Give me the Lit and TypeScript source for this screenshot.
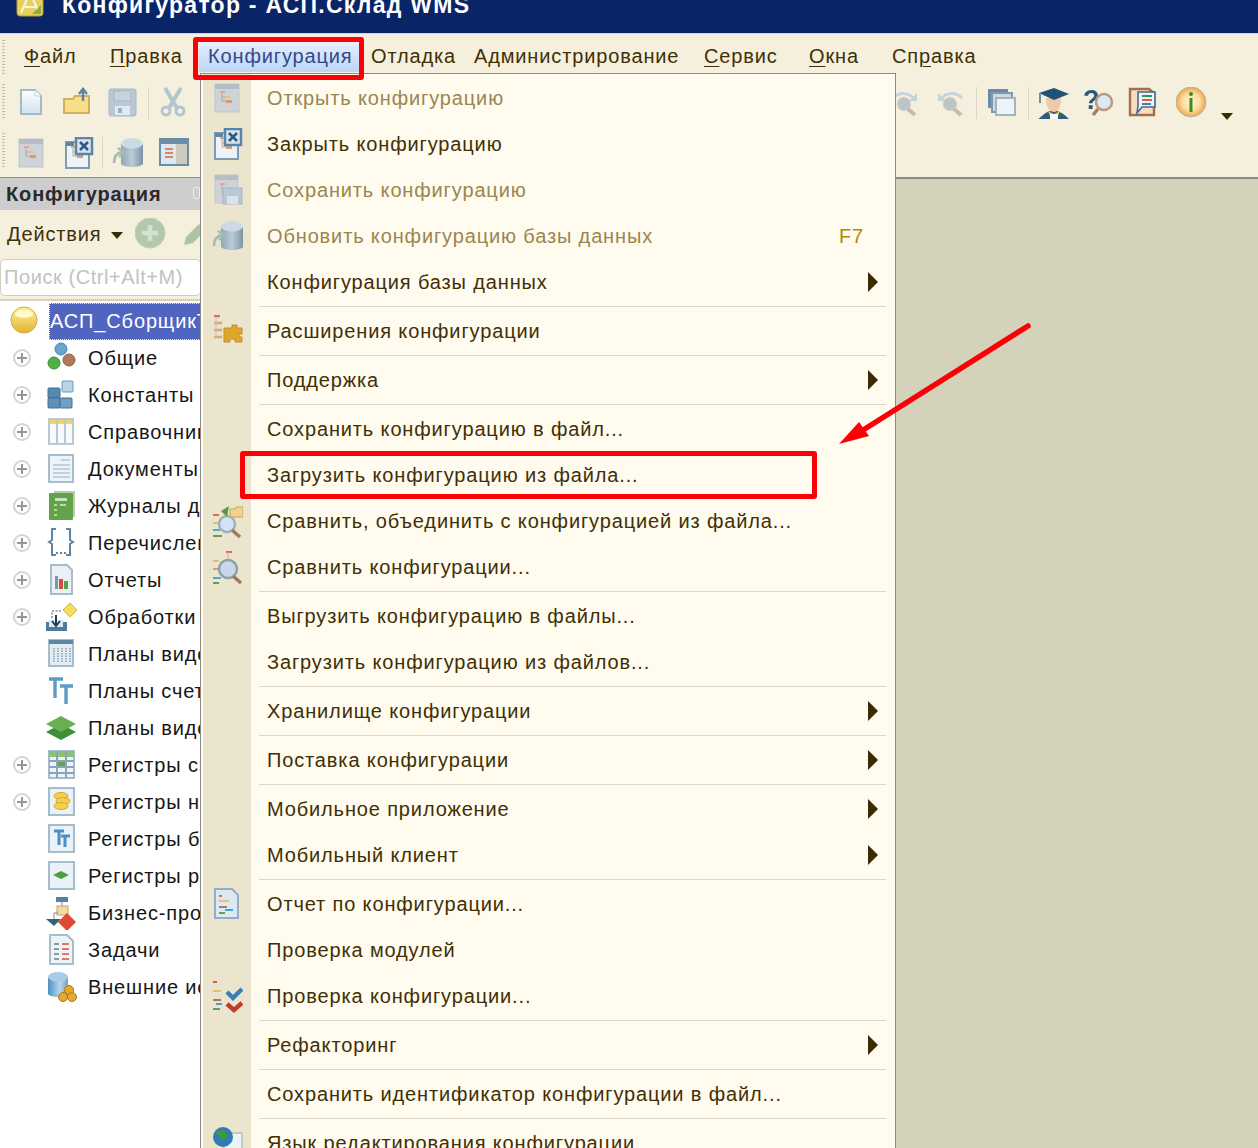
import { LitElement, html, css, svg } from 'lit';
import { customElement } from 'lit/decorators.js';

const tree = svg`
  <rect x="8" y="9" width="5" height="2" fill="#e8a18c"/>
  <path d="M10 11v8h4M10 15h4" stroke="#b5aa96" fill="none"/>
  <rect x="14" y="14" width="4" height="2" fill="#e0c27a"/>
  <rect x="14" y="18" width="6" height="3" fill="#d99a78"/>`;

const icons: Record<string, unknown> = {
  doc: svg`<path d="M5 3h14l6 6v18H5z" fill="url(#gDoc)" stroke="#a3bac8" stroke-width="2"/><path d="M19 3v6h6" fill="#fff" stroke="#c3d0d9"/>`,
  folder: svg`<path d="M2 12h9l2-3h14v17H2z" fill="#f6df86" stroke="#cfae66" stroke-width="2"/><path d="M21 14V3M17 7l4-5 4 5" stroke="#5f819b" stroke-width="2.4" fill="none"/>`,
  save: svg`<rect x="2" y="2" width="27" height="27" rx="2" fill="#b8c8d4" stroke="#a5b8c6"/><rect x="7" y="4" width="17" height="10" fill="#c6d3dd" stroke="#a5b8c6"/><rect x="8" y="19" width="15" height="9" fill="#e1e8ee"/><rect x="11" y="21" width="4" height="5" fill="#9db0be"/>`,
  scissors: svg`<path d="M7 1l12 20M23 1L11 21" stroke="#b4c5d2" stroke-width="4"/><circle cx="8" cy="24" r="4" fill="none" stroke="#b4c5d2" stroke-width="3"/><circle cx="22" cy="24" r="4" fill="none" stroke="#b4c5d2" stroke-width="3"/>`,
  magR: svg`<path d="M3 11c6-6 16-6 21 1" stroke="#c4d3dc" stroke-width="3" fill="none"/><path d="M27 6v8h-8z" fill="#c4d3dc"/><circle cx="14" cy="17" r="6" fill="#b5c5cf" stroke="#cfc4ba" stroke-width="2"/><path d="M18 22l7 6" stroke="#cdb8ac" stroke-width="4"/>`,
  magL: svg`<path d="M27 11C21 5 11 5 6 12" stroke="#c4d3dc" stroke-width="3" fill="none"/><path d="M3 6v8h8z" fill="#c4d3dc"/><circle cx="15" cy="17" r="6" fill="#b5c5cf" stroke="#cfc4ba" stroke-width="2"/><path d="M19 22l7 6" stroke="#cdb8ac" stroke-width="4"/>`,
  windows: svg`<rect x="1" y="2" width="20" height="19" rx="1" fill="#6a8ba6"/><rect x="5" y="6" width="20" height="19" fill="#cdd9e3" stroke="#7c99af" stroke-width="2"/><rect x="9" y="11" width="19" height="17" fill="#eef3f8" stroke="#a0b4c3" stroke-width="2"/>`,
  grad: svg`<path d="M12 24C5 26 3 31 0 32h31c-3-3-6-6-12-8z" fill="#2d5c7c"/><path d="M10 24l3 8h6l3-8-6 3z" fill="#e8c23c"/><rect x="12" y="27" width="8" height="5" fill="#fbfbf4"/><path d="M8 11c0 10 4 14 8 14s7-5 7-14z" fill="#edc9a7"/><path d="M1 6l15-5 15 6-15 6z" fill="#1f5275"/><path d="M2 6v10" stroke="#6f8fa5" stroke-width="2"/>`,
  helpFind: svg`<text x="0" y="22" font-family="Liberation Sans" font-weight="700" font-size="27" fill="#2c5878">?</text><circle cx="21" cy="15" r="8" fill="#dbe9f6" stroke="#b89a80" stroke-width="2.5"/><path d="M15 22l-5 6" stroke="#a57f62" stroke-width="3.5"/>`,
  note: svg`<path d="M2 2h19l5 4v22H2z" fill="#f8dcc4" stroke="#a06f4c" stroke-width="2.4"/><path d="M10 5h17v15H14l-5 6 1-7z" fill="#eef3f8" stroke="#3f6b8c" stroke-width="1.6"/><path d="M14 9h10" stroke="#2f9a58" stroke-width="2"/><path d="M14 13h10" stroke="#e0555a" stroke-width="2"/><path d="M14 17h9" stroke="#4a7ea8" stroke-width="2"/>`,
  info: svg`<circle cx="15" cy="15" r="15" fill="url(#gInfo)" stroke="#bdb4a3"/><circle cx="15" cy="7" r="2" fill="#3f8a22"/><rect x="13.5" y="11" width="3" height="14" fill="#3f8a22"/>`,
  cfg: svg`<rect x="3" y="2" width="24" height="28" fill="#cdd3d7" stroke="#bec7cd"/><rect x="3" y="2" width="24" height="5" fill="#b4bec5"/>${tree}`,
  cfgClose: svg`<rect x="3" y="5" width="23" height="26" fill="#eef3f8" stroke="#7f9bb0" stroke-width="2"/><rect x="3" y="5" width="8" height="4" fill="#5f87a4"/>${tree}<rect x="13" y="1" width="16" height="16" fill="#d7e3ec" stroke="#5a85a6" stroke-width="2.5"/><path d="M17 5l8 8M25 5l-8 8" stroke="#2a5b86" stroke-width="2.6"/>`,
  cfgSave: svg`<rect x="3" y="1" width="23" height="28" fill="#cdd3d7" stroke="#bec7cd"/><rect x="3" y="1" width="23" height="5" fill="#b4bec5"/>${tree}<rect x="11" y="14" width="19" height="16" fill="#b8c8d4" stroke="#a5b8c6"/><rect x="15" y="22" width="11" height="8" fill="#dbe3ea"/>`,
  dbArrow: svg`<ellipse cx="20" cy="7" rx="11" ry="6" fill="#cddae3"/><path d="M9 7v20c3 4 19 4 22 0V7c-3 6-19 6-22 0z" fill="url(#gDb)"/><path d="M2 26c0-6 2-10 8-11M6 11l6 4-5 5" stroke="#a7bcb0" stroke-width="2.6" fill="none"/>`,
  form: svg`<rect x="1" y="2" width="28" height="26" fill="#dfe8ef" stroke="#6b8ea8" stroke-width="2"/><rect x="1" y="2" width="28" height="5" fill="#6b8ea8"/><rect x="17" y="7" width="11" height="20" fill="#cfcabe"/><path d="M6 12h8M6 16h8M6 20h8" stroke="#d58a65" stroke-width="2"/>`,
  add: svg`<circle cx="15" cy="15" r="15" fill="#b3c9ae" stroke="#c2ccb8"/><path d="M15 7v16M7 15h16" stroke="#d3e2d0" stroke-width="4.5"/>`,
  pencil: svg`<path d="M3 27l2-8L18 6l7 6-13 13z" fill="#b0c4a2"/>`,
  ext: svg`<path d="M2 1h6" stroke="#e2685c" stroke-width="2.4"/><path d="M2 8h8M2 15h8M2 22h8" stroke="#d5a878" stroke-width="2.4"/><path d="M4 2v21" stroke="#c8c0ae"/><path d="M12 13h8v-3h5v3h5v6h-3v3h3v5h-7v-3h-5v3h-6z" fill="#e0a52c" stroke="#c48e20"/>`,
  cmpFolder: svg`<path d="M1 10h6" stroke="#e2685c" stroke-width="2"/><path d="M1 18h6" stroke="#e0c074" stroke-width="2"/><path d="M1 25h7" stroke="#47a8d6" stroke-width="2"/><path d="M1 31h9" stroke="#62a055" stroke-width="2"/><circle cx="15" cy="19" r="8" fill="#d3e3f3" stroke="#9fb1bd" stroke-width="2.5"/><path d="M20 25l8 7" stroke="#a07a5e" stroke-width="3.5"/><path d="M17 1l-8 5 6 6z" fill="#5a9a46"/><path d="M18 4h5l1-2h7v10H18z" fill="#efd48c" stroke="#c5a45e"/>`,
  cmp: svg`<path d="M14 1h6" stroke="#e2685c" stroke-width="2"/><path d="M1 10h6" stroke="#e0c074" stroke-width="2"/><path d="M1 18h6" stroke="#d99a78" stroke-width="2"/><path d="M1 27h8" stroke="#47a8d6" stroke-width="2"/><path d="M1 32h6" stroke="#62a055" stroke-width="2"/><circle cx="16" cy="18" r="9" fill="#c8d8e8" stroke="#8ea0ae" stroke-width="2.5"/><path d="M16 1v8" stroke="#d7a2a0"/><path d="M21 25l8 7" stroke="#a07a5e" stroke-width="3.5"/>`,
  report: svg`<path d="M3 1h17l6 6v23H3z" fill="#dce8f2" stroke="#94aebf" stroke-width="2"/><path d="M7 8h3" stroke="#e2685c" stroke-width="2"/><path d="M7 13h10" stroke="#e3c36b" stroke-width="2"/><path d="M7 19h8" stroke="#b07b5a" stroke-width="2"/><path d="M13 22h8" stroke="#37a8d8" stroke-width="2"/><path d="M7 25h6" stroke="#62a055" stroke-width="2"/>`,
  check: svg`<path d="M1 2h4" stroke="#e25248" stroke-width="2"/><path d="M1 11h8" stroke="#e3c36b" stroke-width="2"/><path d="M1 20h8" stroke="#b07b5a" stroke-width="2"/><path d="M4 24h6" stroke="#37a8d8" stroke-width="2"/><path d="M1 29h7" stroke="#62a055" stroke-width="2"/><path d="M15 12l6 6 9-9" stroke="#3a7eb8" stroke-width="4.4" fill="none"/><path d="M15 24l7 6 8-7" stroke="#bd3d30" stroke-width="4.4" fill="none"/>`,
  globe: svg`<rect x="12" y="6" width="18" height="24" fill="#eef3f8" stroke="#8fa9b8"/><circle cx="11" cy="10" r="10" fill="#2e7fb0"/><path d="M4 5c5-3 9-2 11 2s-4 6-7 4z" fill="#3b9a3d"/><rect x="1" y="22" width="28" height="8" fill="#4f7a99"/>`,
  ball: svg`<circle cx="15" cy="15" r="13" fill="url(#gBall)" stroke="#d0ab40"/><ellipse cx="15" cy="9" rx="9" ry="4" fill="#fff8c8"/>`,
  common: svg`<circle cx="15" cy="7" r="6" fill="#6aa2d0" stroke="#4a84b4"/><circle cx="8" cy="21" r="6" fill="#4fb04a" stroke="#368f33"/><circle cx="23" cy="18" r="6" fill="#b07b5a" stroke="#8e5e40"/>`,
  constants: svg`<rect x="2" y="9" width="12" height="10" rx="1" fill="#5788ad" stroke="#3f6f94"/><rect x="2" y="19" width="12" height="10" rx="1" fill="#5f90b5" stroke="#3f6f94"/><rect x="14" y="19" width="12" height="10" rx="1" fill="#6f9fc2" stroke="#3f6f94"/><rect x="16" y="2" width="11" height="11" rx="1" fill="#b9d2e4" stroke="#6d9abb"/>`,
  catalogs: svg`<rect x="3" y="3" width="24" height="25" fill="#f7f9fb" stroke="#b8c8d4" stroke-width="2"/><rect x="4" y="4" width="22" height="4" fill="#f2d35e"/><path d="M11 3v25M19 3v25" stroke="#b8c8d4" stroke-width="2"/>`,
  documents: svg`<rect x="3" y="2" width="24" height="27" fill="#eef3f8" stroke="#a5bccb" stroke-width="2"/><path d="M15 7h9M7 12h17M7 16h17M7 20h17M7 24h17" stroke="#b5c6d2" stroke-width="1.6"/>`,
  journal: svg`<rect x="8" y="1" width="21" height="26" fill="#b8cfae"/><rect x="3" y="3" width="24" height="27" rx="1" fill="#62a24a"/><rect x="9" y="8" width="12" height="3" fill="#c8e2bd"/><path d="M8 15h3M8 20h3M8 25h3M14 15h6" stroke="#d5e9cc" stroke-width="1.5"/>`,
  enums: svg`<path d="M10 2H6v11l-3 2 3 2v11h4M20 2h4v11l3 2-3 2v11h-4" stroke="#5f87a4" stroke-width="2" fill="none"/><path d="M10 26h2M14 26h2M18 26h2" stroke="#5f87a4" stroke-width="2"/>`,
  reports: svg`<path d="M5 1h16l5 5v24H5z" fill="#eaf0f6" stroke="#a5bccb" stroke-width="2"/><rect x="9" y="12" width="3" height="13" fill="#7b95a9"/><rect x="13" y="15" width="4" height="10" fill="#d84a3c"/><rect x="18" y="17" width="4" height="8" fill="#4da843"/>`,
  processing: svg`<path d="M17 9l7-7 7 7-7 7z" fill="#f6dc5b" stroke="#d4b53d"/><path d="M15 10H6v8" stroke="#555" stroke-dasharray="2 1.5" fill="none"/><path d="M0 21h21v9H0z" fill="#4f7a99"/><rect x="3" y="19" width="14" height="7" fill="#dce8f2"/><path d="M10 14v10M6 20l4 5 4-5" stroke="#1f3f5a" stroke-width="2" fill="none"/>`,
  charts: svg`<rect x="3" y="2" width="24" height="26" fill="#e4ecf2" stroke="#a5bccb" stroke-width="2"/><rect x="3" y="2" width="24" height="4" fill="#5f87a4"/><path d="M8 10v14M12 10v14M16 10v14M20 10v14M24 10v14" stroke="#9db2c2" stroke-width="2" stroke-dasharray="1.5 1"/>`,
  accounts: svg`<path d="M3 4h14M9 4v19" stroke="#5b9ccb" stroke-width="3.4" fill="none"/><path d="M14 11h13M20 11v18" stroke="#5b9ccb" stroke-width="3.4" fill="none"/>`,
  layers: svg`<path d="M0 20l15-8 15 8-15 8z" fill="#3d8f3a"/><path d="M0 12l15-8 15 8-15 8z" fill="#6aaf4f"/>`,
  regInfo: svg`<rect x="3" y="2" width="25" height="27" fill="#eef3f8" stroke="#a5bccb" stroke-width="2"/><rect x="3" y="2" width="25" height="6" fill="#8cc076"/><path d="M11 2v27M20 2v27M3 12h25M3 18h25M3 24h25" stroke="#8aa5b8" stroke-width="2"/><rect x="12" y="13" width="7" height="4" fill="#62a84a"/>`,
  regAccum: svg`<rect x="3" y="2" width="25" height="27" fill="#eaf1f7" stroke="#a5bccb" stroke-width="2"/><ellipse cx="15" cy="10" rx="7" ry="3.5" fill="#f2cf4e" stroke="#d8a82a"/><ellipse cx="17" cy="15" rx="7" ry="3.5" fill="#f2cf4e" stroke="#d8a82a"/><ellipse cx="15" cy="20" rx="7" ry="3.5" fill="#f2cf4e" stroke="#d8a82a"/>`,
  regBuh: svg`<rect x="3" y="2" width="25" height="27" fill="#eaf1f7" stroke="#a5bccb" stroke-width="2"/><path d="M8 8h10M13 8v14" stroke="#4b8fc0" stroke-width="3" fill="none"/><path d="M15 13h9M19 13v11" stroke="#4b8fc0" stroke-width="3" fill="none"/>`,
  regCalc: svg`<rect x="3" y="2" width="25" height="27" fill="#eaf1f7" stroke="#a5bccb" stroke-width="2"/><path d="M7 15l8-4 8 4-8 4z" fill="#4f9f3f"/>`,
  bp: svg`<rect x="10" y="0" width="12" height="5" fill="#4e83ad"/><path d="M16 5v5" stroke="#888"/><rect x="11" y="9" width="11" height="9" fill="#f1d9a8" stroke="#c2a06a"/><path d="M0 22h15l-7 7z" fill="#3c5f79"/><path d="M21 16l9 9-9 9-9-9z" fill="#de4b33"/><path d="M8 22v-6h4" stroke="#888" fill="none"/>`,
  tasks: svg`<path d="M4 1h17l6 6v23H4z" fill="#eef3f8" stroke="#a5bccb" stroke-width="2"/><path d="M8 10h5M8 15h5M8 20h5M8 25h5" stroke="#8c99a3" stroke-width="2"/><path d="M16 10h7M16 15h7M16 20h7M16 25h7" stroke="#dd7a6e" stroke-width="2"/>`,
  source: svg`<ellipse cx="12" cy="6" rx="10" ry="5" fill="#a9cde6"/><path d="M2 6v17c2 4 18 4 20 0V6c-2 6-18 6-20 0z" fill="url(#gSrc)"/><circle cx="23" cy="19" r="4.5" fill="#e5a92c" stroke="#a9771a"/><circle cx="17" cy="26" r="4.5" fill="#e5a92c" stroke="#a9771a"/><circle cx="26" cy="26" r="4.5" fill="#e5a92c" stroke="#a9771a"/>`,
};

const icon = (name?: string) =>
  name
    ? html`<svg class="ico" viewBox="0 0 31 33" aria-hidden="true">
        <defs>
          <linearGradient id="gDoc" x2="0" y2="1"><stop offset="0" stop-color="#fff"/><stop offset="1" stop-color="#cfe0ef"/></linearGradient>
          <linearGradient id="gDb"><stop offset="0" stop-color="#8fa8bb"/><stop offset=".5" stop-color="#bccbd6"/><stop offset="1" stop-color="#7c94a6"/></linearGradient>
          <linearGradient id="gSrc"><stop offset="0" stop-color="#4f8fbf"/><stop offset=".6" stop-color="#b8d8ee"/><stop offset="1" stop-color="#6ca3c8"/></linearGradient>
          <radialGradient id="gInfo"><stop offset="0" stop-color="#fff6d8"/><stop offset=".6" stop-color="#fbdc9c"/><stop offset="1" stop-color="#efa24a"/></radialGradient>
          <linearGradient id="gBall" x2="0" y2="1"><stop offset="0" stop-color="#fff3a8"/><stop offset="1" stop-color="#e3b12c"/></linearGradient>
        </defs>
        ${icons[name]}
      </svg>`
    : '';

type Entry = { t?: string; i?: string; off?: boolean; arrow?: boolean; key?: string; sep?: boolean };

const menu: Entry[] = [
  { t: 'Открыть конфигурацию', i: 'cfg', off: true },
  { t: 'Закрыть конфигурацию', i: 'cfgClose' },
  { t: 'Сохранить конфигурацию', i: 'cfgSave', off: true },
  { t: 'Обновить конфигурацию базы данных', i: 'dbArrow', off: true, key: 'F7' },
  { t: 'Конфигурация базы данных', arrow: true },
  { sep: true },
  { t: 'Расширения конфигурации', i: 'ext' },
  { sep: true },
  { t: 'Поддержка', arrow: true },
  { sep: true },
  { t: 'Сохранить конфигурацию в файл...' },
  { t: 'Загрузить конфигурацию из файла...' },
  { t: 'Сравнить, объединить с конфигурацией из файла...', i: 'cmpFolder' },
  { t: 'Сравнить конфигурации...', i: 'cmp' },
  { sep: true },
  { t: 'Выгрузить конфигурацию в файлы...' },
  { t: 'Загрузить конфигурацию из файлов...' },
  { sep: true },
  { t: 'Хранилище конфигурации', arrow: true },
  { sep: true },
  { t: 'Поставка конфигурации', arrow: true },
  { sep: true },
  { t: 'Мобильное приложение', arrow: true },
  { t: 'Мобильный клиент', arrow: true },
  { sep: true },
  { t: 'Отчет по конфигурации...', i: 'report' },
  { t: 'Проверка модулей' },
  { t: 'Проверка конфигурации...', i: 'check' },
  { sep: true },
  { t: 'Рефакторинг', arrow: true },
  { sep: true },
  { t: 'Сохранить идентификатор конфигурации в файл...' },
  { sep: true },
  { t: 'Язык редактирования конфигурации', i: 'globe' },
];

const treeRows: [string, string, boolean][] = [
  ['Общие', 'common', true],
  ['Константы', 'constants', true],
  ['Справочники', 'catalogs', true],
  ['Документы', 'documents', true],
  ['Журналы документов', 'journal', true],
  ['Перечисления', 'enums', true],
  ['Отчеты', 'reports', true],
  ['Обработки', 'processing', true],
  ['Планы видов характеристик', 'charts', false],
  ['Планы счетов', 'accounts', false],
  ['Планы видов расчета', 'layers', false],
  ['Регистры сведений', 'regInfo', true],
  ['Регистры накопления', 'regAccum', true],
  ['Регистры бухгалтерии', 'regBuh', false],
  ['Регистры расчета', 'regCalc', false],
  ['Бизнес-процессы', 'bp', false],
  ['Задачи', 'tasks', false],
  ['Внешние источники данных', 'source', false],
];

@customElement('app-root')
export class AppRoot extends LitElement {
  static styles = css`
    :host {
      display: block;
      position: relative;
      width: 1258px;
      height: 1148px;
      overflow: hidden;
      background: #d4d2ba;
      font-family: 'Liberation Sans', Arial, sans-serif;
      font-size: 20px;
      letter-spacing: 0.86px;
      color: #412f05;
    }
    .ico {
      display: block;
      width: 31px;
      height: 33px;
      filter: blur(0.55px);
    }

    .title {
      height: 33px;
      box-sizing: border-box;
      background: #0a2468;
      display: flex;
      align-items: flex-end;
      padding: 0 0 13px 16px;
      gap: 18px;
      color: #fff;
      font-weight: 700;
      font-size: 23px;
      letter-spacing: 1.25px;
      line-height: 30px;
      overflow: hidden;
    }
    .logo {
      width: 28px;
      height: 28px;
      margin-bottom: 3px;
      flex: none;
      filter: blur(0.4px);
    }

    .bars {
      height: 146px;
      box-sizing: border-box;
      background: #f5f0dd;
      border-top: 1px solid #d8d4c4;
      border-bottom: 2px solid #8d8c85;
      position: relative;
    }
    .menubar {
      height: 42px;
      display: grid;
      grid-template-columns: 86px 98px 163px 103px 230px 105px 83px auto;
      padding-left: 24px;
      align-items: center;
      line-height: 44px;
    }
    .menubar span {
      white-space: nowrap;
    }
    .menubar .open {
      color: #34498a;
      position: relative;
    }
    .menubar .open::before {
      content: '';
      position: absolute;
      left: -9px;
      top: 5px;
      width: 160px;
      height: 33px;
      background: linear-gradient(#eaf2fe, #bcd5f6);
      z-index: 0;
    }
    .menubar .open b {
      position: relative;
      font-weight: 400;
    }
    u {
      text-underline-offset: 3px;
      text-decoration-thickness: 1px;
    }
    .tools {
      height: 50px;
      display: flex;
      align-items: center;
      padding-left: 16px;
    }
    .tools.first {
      margin-top: 2px;
    }
    .tool {
      width: 45.5px;
      flex: none;
    }
    .vsep {
      width: 1px;
      height: 32px;
      background: #dcd6bf;
      margin: 0 9px 0 0;
      flex: none;
    }
    .grip {
      position: absolute;
      left: 2px;
      width: 3px;
      height: 36px;
      background: repeating-linear-gradient(#c5bfa8 0 1px, transparent 1px 3px);
    }
    .right {
      margin-left: auto;
      display: flex;
      align-items: center;
      padding-right: 25px;
    }
    .caret {
      width: 0;
      height: 0;
      border: 6.5px solid transparent;
      border-top: 7px solid #3a2b05;
      border-bottom: 0;
      margin: 26px 0 0 0;
    }

    .panel {
      position: absolute;
      left: 0;
      top: 178px;
      width: 201px;
      height: 970px;
      background: #fff;
      overflow: hidden;
      white-space: nowrap;
    }
    .head {
      height: 32px;
      background: #cdcdcd;
      color: #2a2a2a;
      font-weight: 700;
      line-height: 32px;
      padding-left: 6px;
      position: relative;
    }
    .pin {
      position: absolute;
      left: 193px;
      top: 9px;
      width: 5px;
      height: 10px;
      border: 1.5px solid #eeeeee;
      border-radius: 2px;
    }
    .actions {
      height: 49px;
      background: #f5f0dd;
      display: flex;
      align-items: center;
      padding-left: 7px;
    }
    .actions .caret {
      margin: 2px 0 0 9px;
    }
    .actions .add {
      margin-left: 12px;
    }
    .actions .pen {
      margin-left: 15px;
    }
    .search {
      height: 42px;
      box-sizing: border-box;
      background: #f5f0dd;
      padding-bottom: 3px;
      border-bottom: 2px solid #d6d1b9;
    }
    .search div {
      height: 37px;
      box-sizing: border-box;
      background: #fff;
      border: 1px solid #cfcdc4;
      border-radius: 5px;
      color: #c2c2c2;
      line-height: 35px;
      padding-left: 3px;
      letter-spacing: 0.57px;
    }
    .rows {
      padding-top: 2px;
      color: #161616;
    }
    .row {
      height: 37px;
      display: flex;
      align-items: center;
    }
    .exp {
      width: 44px;
      flex: none;
      display: flex;
      justify-content: center;
    }
    .exp i {
      width: 18px;
      height: 18px;
      box-sizing: border-box;
      border: 2px solid #d4d4d4;
      border-radius: 50%;
      position: relative;
      display: block;
      margin-top: -2px;
    }
    .exp i::before,
    .exp i::after {
      content: '';
      position: absolute;
      background: #969696;
    }
    .exp i::before {
      left: 2px;
      right: 2px;
      top: 6px;
      height: 2px;
    }
    .exp i::after {
      top: 2px;
      bottom: 2px;
      left: 6px;
      width: 2px;
    }
    .tico {
      width: 34px;
      flex: none;
      display: flex;
      justify-content: center;
    }
    .row .label {
      margin-left: 10px;
    }
    .root .ball {
      width: 49px;
      flex: none;
      display: flex;
      justify-content: center;
    }
    .root .label {
      margin: 0;
      flex: 1;
      background: #5065c0;
      color: #fff;
      height: 37px;
      line-height: 37px;
      box-sizing: border-box;
      outline: 1px dotted #e7e7e7;
      outline-offset: -1px;
      padding-left: 1px;
    }

    .menu {
      position: absolute;
      left: 200px;
      top: 73px;
      width: 696px;
      height: 1080px;
      box-sizing: border-box;
      background: linear-gradient(90deg, #fffbef 0 2px, #ece5ce 2px 50px, #fffbef 50px);
      border: 1px solid #8a8a86;
      padding-top: 1px;
      overflow: hidden;
      white-space: nowrap;
    }
    .item {
      height: 46px;
      display: flex;
      align-items: center;
    }
    .item .mi {
      width: 66px;
      flex: none;
      padding-left: 11px;
      box-sizing: border-box;
    }
    .item .lbl {
      flex: 1;
    }
    .item.off {
      color: #9a8650;
    }
    .key {
      margin-right: 31px;
      color: #b8860b;
    }
    .tri {
      width: 0;
      height: 0;
      border-left: 10px solid #3a2b05;
      border-top: 10px solid transparent;
      border-bottom: 10px solid transparent;
      margin-right: 17px;
    }
    .sep {
      height: 1px;
      margin: 1px 9px 1px 58px;
      background: #dcd8c8;
    }

    .mark {
      position: absolute;
      box-sizing: border-box;
      border: 5px solid #fb0007;
      border-radius: 3px;
    }
    .mark.a {
      left: 193px;
      top: 37px;
      width: 171px;
      height: 43px;
    }
    .mark.b {
      left: 240px;
      top: 451px;
      width: 577px;
      height: 48px;
    }
    .arrow {
      position: absolute;
      left: 830px;
      top: 315px;
      width: 210px;
      height: 140px;
    }
  `;

  render() {
    return html`
      <div class="title">
        <svg class="logo" viewBox="0 0 28 28" aria-hidden="true">
          <rect x="1" y="1" width="26" height="26" rx="3" fill="#e8d25a" stroke="#b79a2c"/>
          <path d="M5 24L14 3l9 21M9 18h11" stroke="#f5f5ee" stroke-width="2" fill="none"/>
          <path d="M16 25h9v-9z" fill="#8cae45"/>
        </svg>
        <span>Конфигуратор - АСП.Склад WMS</span>
      </div>

      <div class="bars">
        <div class="menubar">
          <span><u>Ф</u>айл</span>
          <span><u>П</u>равка</span>
          <span class="open"><b>Конфигурация</b></span>
          <span>Отладка</span>
          <span>Администрирование</span>
          <span><u>С</u>ервис</span>
          <span><u>О</u>кна</span>
          <span>Сп<u>р</u>авка</span>
        </div>
        <div class="grip" style="top:6px"></div>
        <div class="grip" style="top:50px"></div>
        <div class="grip" style="top:99px"></div>
        <div class="tools first">
          <div class="tool">${icon('doc')}</div>
          <div class="tool">${icon('folder')}</div>
          <div class="tool" style="width:41px">${icon('save')}</div>
          <div class="vsep"></div>
          <div class="tool">${icon('scissors')}</div>
          <div class="right">
            <div class="tool" style="width:44.5px">${icon('magR')}</div>
            <div class="tool" style="width:41px">${icon('magL')}</div>
            <div class="vsep" style="margin-right:10px"></div>
            <div class="tool" style="width:41px">${icon('windows')}</div>
            <div class="vsep" style="margin-right:9px"></div>
            <div class="tool">${icon('grad')}</div>
            <div class="tool" style="width:45px">${icon('helpFind')}</div>
            <div class="tool" style="width:48px">${icon('note')}</div>
            <div class="tool" style="width:45px">${icon('info')}</div>
            <div class="caret"></div>
          </div>
        </div>
        <div class="tools">
          <div class="tool" style="width:47px">${icon('cfg')}</div>
          <div class="tool" style="width:39px">${icon('cfgClose')}</div>
          <div class="vsep"></div>
          <div class="tool" style="width:47px">${icon('dbArrow')}</div>
          <div class="tool">${icon('form')}</div>
        </div>
      </div>

      <div class="panel">
        <div class="head">Конфигурация<span class="pin"></span></div>
        <div class="actions">
          Действия
          <div class="caret"></div>
          <div class="add">${icon('add')}</div>
          <div class="pen">${icon('pencil')}</div>
        </div>
        <div class="search"><div>Поиск (Ctrl+Alt+M)</div></div>
        <div class="rows">
          <div class="row root">
            <div class="ball">${icon('ball')}</div>
            <div class="label">АСП_СборщикТСД</div>
          </div>
          ${treeRows.map(
            ([label, name, expandable]) => html`
              <div class="row">
                <div class="exp">${expandable ? html`<i></i>` : ''}</div>
                <div class="tico">${icon(name)}</div>
                <div class="label">${label}</div>
              </div>
            `
          )}
        </div>
      </div>

      <div class="menu">
        ${menu.map(m =>
          m.sep
            ? html`<div class="sep"></div>`
            : html`
                <div class="item ${m.off ? 'off' : ''}">
                  <div class="mi">${icon(m.i)}</div>
                  <div class="lbl">${m.t}</div>
                  ${m.key ? html`<div class="key">${m.key}</div>` : ''}
                  ${m.arrow ? html`<div class="tri"></div>` : ''}
                </div>
              `
        )}
      </div>

      <div class="mark a"></div>
      <div class="mark b"></div>
      <svg class="arrow" viewBox="830 315 210 140" aria-hidden="true">
        <path d="M1028 326L860 432" stroke="#fb0007" stroke-width="5.5" stroke-linecap="round"/>
        <path d="M839 444L869 436L859 422z" fill="#fb0007"/>
      </svg>
    `;
  }
}
